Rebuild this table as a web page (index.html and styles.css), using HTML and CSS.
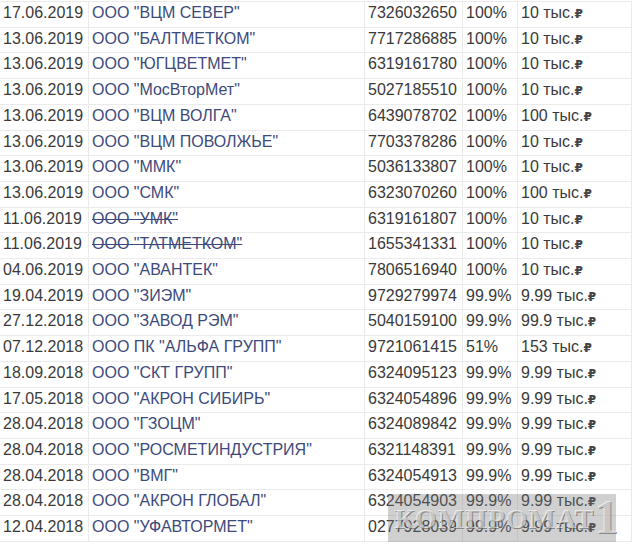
FILE: index.html
```html
<!DOCTYPE html>
<html lang="ru">
<head>
<meta charset="utf-8">
<link rel="stylesheet" href="styles.css">
</head>
<body>
<div class="page">
<div class="grid">
<div class="c">17.06.2019</div><div class="c n">ООО "ВЦМ СЕВЕР"</div><div class="c">7326032650</div><div class="c">100%</div><div class="c">10 тыс.<span class="r">₽</span></div>
<div class="c">13.06.2019</div><div class="c n">ООО "БАЛТМЕТКОМ"</div><div class="c">7717286885</div><div class="c">100%</div><div class="c">10 тыс.<span class="r">₽</span></div>
<div class="c">13.06.2019</div><div class="c n">ООО "ЮГЦВЕТМЕТ"</div><div class="c">6319161780</div><div class="c">100%</div><div class="c">10 тыс.<span class="r">₽</span></div>
<div class="c">13.06.2019</div><div class="c n">ООО "МосВторМет"</div><div class="c">5027185510</div><div class="c">100%</div><div class="c">10 тыс.<span class="r">₽</span></div>
<div class="c">13.06.2019</div><div class="c n">ООО "ВЦМ ВОЛГА"</div><div class="c">6439078702</div><div class="c">100%</div><div class="c">100 тыс.<span class="r">₽</span></div>
<div class="c">13.06.2019</div><div class="c n">ООО "ВЦМ ПОВОЛЖЬЕ"</div><div class="c">7703378286</div><div class="c">100%</div><div class="c">10 тыс.<span class="r">₽</span></div>
<div class="c">13.06.2019</div><div class="c n">ООО "ММК"</div><div class="c">5036133807</div><div class="c">100%</div><div class="c">10 тыс.<span class="r">₽</span></div>
<div class="c">13.06.2019</div><div class="c n">ООО "СМК"</div><div class="c">6323070260</div><div class="c">100%</div><div class="c">100 тыс.<span class="r">₽</span></div>
<div class="c">11.06.2019</div><div class="c n"><s>ООО "УМК"</s></div><div class="c">6319161807</div><div class="c">100%</div><div class="c">10 тыс.<span class="r">₽</span></div>
<div class="c">11.06.2019</div><div class="c n"><s>ООО "ТАТМЕТКОМ"</s></div><div class="c">1655341331</div><div class="c">100%</div><div class="c">10 тыс.<span class="r">₽</span></div>
<div class="c">04.06.2019</div><div class="c n">ООО "АВАНТЕК"</div><div class="c">7806516940</div><div class="c">100%</div><div class="c">10 тыс.<span class="r">₽</span></div>
<div class="c">19.04.2019</div><div class="c n">ООО "ЗИЭМ"</div><div class="c">9729279974</div><div class="c">99.9%</div><div class="c">9.99 тыс.<span class="r">₽</span></div>
<div class="c">27.12.2018</div><div class="c n">ООО "ЗАВОД РЭМ"</div><div class="c">5040159100</div><div class="c">99.9%</div><div class="c">99.9 тыс.<span class="r">₽</span></div>
<div class="c">07.12.2018</div><div class="c n">ООО ПК "АЛЬФА ГРУПП"</div><div class="c">9721061415</div><div class="c">51%</div><div class="c">153 тыс.<span class="r">₽</span></div>
<div class="c">18.09.2018</div><div class="c n">ООО "СКТ ГРУПП"</div><div class="c">6324095123</div><div class="c">99.9%</div><div class="c">9.99 тыс.<span class="r">₽</span></div>
<div class="c">17.05.2018</div><div class="c n">ООО "АКРОН СИБИРЬ"</div><div class="c">6324054896</div><div class="c">99.9%</div><div class="c">9.99 тыс.<span class="r">₽</span></div>
<div class="c">28.04.2018</div><div class="c n">ООО "ГЗОЦМ"</div><div class="c">6324089842</div><div class="c">99.9%</div><div class="c">9.99 тыс.<span class="r">₽</span></div>
<div class="c">28.04.2018</div><div class="c n">ООО "РОСМЕТИНДУСТРИЯ"</div><div class="c">6321148391</div><div class="c">99.9%</div><div class="c">9.99 тыс.<span class="r">₽</span></div>
<div class="c">28.04.2018</div><div class="c n">ООО "ВМГ"</div><div class="c">6324054913</div><div class="c">99.9%</div><div class="c">9.99 тыс.<span class="r">₽</span></div>
<div class="c">28.04.2018</div><div class="c n">ООО "АКРОН ГЛОБАЛ"</div><div class="c">6324054903</div><div class="c">99.9%</div><div class="c">9.99 тыс.<span class="r">₽</span></div>
<div class="c">12.04.2018</div><div class="c n">ООО "УФАВТОРМЕТ"</div><div class="c">0277928039</div><div class="c">99.9%</div><div class="c">9.99 тыс.<span class="r">₽</span></div>
</div>
<div class="wm">КОМПРОМАТ<span class="wm1">1</span></div>
</div>
</body>
</html>
```
FILE: styles.css
```css
html, body {
  margin: 0;
  padding: 0;
  background: #ffffff;
}
.page {
  position: relative;
  padding-top: 1px;
  width: 632px;
  height: 550px;
  overflow: hidden;
}
.grid {
  display: grid;
  grid-template-columns: 89px 276px 98px 55px 114px;
  grid-auto-rows: 25.714px;
  border-top: 1px solid #ebebeb;
  font-family: "Liberation Sans", Arial, "DejaVu Sans", sans-serif;
  font-size: 16px;
  color: #3a3a3a;
}
.c {
  box-sizing: border-box;
  border-right: 1px solid #ebebeb;
  border-bottom: 1px solid #ebebeb;
  padding: 0 0 0 3px;
  line-height: 21px;
  white-space: nowrap;
  overflow: hidden;
}
.n {
  color: #3d4a7c;
}
.n s {
  text-decoration-thickness: 1px;
}
.r {
  font-family: "DejaVu Sans", sans-serif;
  font-size: 12px;
  font-weight: bold;
  color: #444444;
}
.wm {
  position: absolute;
  left: 388px;
  top: 494px;
  width: 228px;
  height: 48px;
  background: rgba(120, 120, 120, 0.35);
  font-family: "Liberation Serif", serif;
  font-weight: bold;
  font-size: 28px;
  line-height: 50px;
  color: rgba(255, 255, 255, 0.55);
  text-shadow: 1px 1px 0 rgba(90, 90, 90, 0.6);
  letter-spacing: 1px;
  padding-left: 6px;
  box-sizing: border-box;
  white-space: nowrap;
}
.wm1 {
  font-size: 48px;
  vertical-align: top;
  line-height: 46px;
}
```
